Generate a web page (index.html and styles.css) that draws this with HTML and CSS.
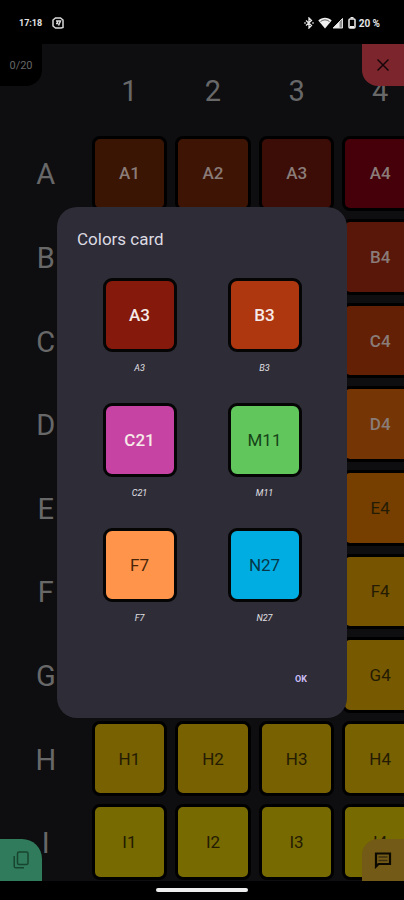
FILE: index.html
```html
<!DOCTYPE html>
<html lang="en">
<head>
<meta charset="utf-8">
<meta name="viewport" content="width=device-width, initial-scale=1">
<title>Colors card</title>
<link rel="stylesheet" href="styles.css">
</head>
<body>
<header class="status">
  <div class="status-group status-left">
    <span>17:18</span>
    <svg class="status-app" viewBox="0 0 12 12" width="12" height="12" fill="none" stroke="#d8d8d8" stroke-width="1.5"><path d="M3.5 1h5L11 3v7.500L9 11H3.500L1 9V3z"/><path d="M4 4h1.500v2.500H4M6 4h2.500L6.500 8.500"/></svg>
  </div>
  <div class="status-group status-right">
    <svg viewBox="0 0 10 12" width="10" height="12" fill="none" stroke="#e8e8e8" stroke-width="1.300"><path d="M2 3.500l5.500 5L5 11V1l2.500 2.500-5.500 5M.3 6h1.400M8.300 6h1.400"/></svg>
    <svg class="wifi" viewBox="0 0 14 12" width="14" height="12" fill="#f0f0f0"><path d="M7 11.500L.3 3.500C4-.2 10-.2 13.700 3.500z"/><path d="M2.500 4.500Q7 1.200 11.500 4.500" fill="none" stroke="#000" stroke-width=".6"/></svg>
    <svg viewBox="0 0 12 12" width="12" height="12"><path d="M11 1v10H1z" fill="#8d8d8d"/><path d="M7.500 4.500V11H1z" fill="#f0f0f0"/><path d="M10.500 1.500V11H1z" fill="none" stroke="#ddd"/></svg>
    <svg class="battery" viewBox="0 0 8 12" width="8" height="12"><path d="M2.500 0h3v1.500h-3z" fill="#eee"/><rect x="1" y="2" width="6" height="9" rx="1" fill="none" stroke="#eee" stroke-width="1.500"/><path d="M2 9h4v2H2z" fill="#eee"/></svg>
    <span>20 %</span>
  </div>
</header>
<main class="stage">
  <table class="board">
    <thead><tr><td></td><th scope="col">1</th><th scope="col">2</th><th scope="col">3</th><th scope="col">4</th></tr></thead>
    <tbody>
      <tr class="row-a"><th scope="row">A</th><td class="a1"><span>A1</span></td><td class="a2"><span>A2</span></td><td class="a3"><span>A3</span></td><td class="a4"><span>A4</span></td></tr>
      <tr class="row-b"><th scope="row">B</th><td><span></span></td><td><span></span></td><td><span></span></td><td><span>B4</span></td></tr>
      <tr class="row-c"><th scope="row">C</th><td><span></span></td><td><span></span></td><td><span></span></td><td><span>C4</span></td></tr>
      <tr class="row-d"><th scope="row">D</th><td><span></span></td><td><span></span></td><td><span></span></td><td><span>D4</span></td></tr>
      <tr class="row-e dark"><th scope="row">E</th><td><span></span></td><td><span></span></td><td><span></span></td><td><span>E4</span></td></tr>
      <tr class="row-f dark"><th scope="row">F</th><td><span></span></td><td><span></span></td><td><span></span></td><td><span>F4</span></td></tr>
      <tr class="row-g dark"><th scope="row">G</th><td><span></span></td><td><span></span></td><td><span></span></td><td><span>G4</span></td></tr>
      <tr class="row-h dark"><th scope="row">H</th><td><span>H1</span></td><td><span>H2</span></td><td><span>H3</span></td><td><span>H4</span></td></tr>
      <tr class="row-i dark"><th scope="row">I</th><td><span>I1</span></td><td><span>I2</span></td><td><span>I3</span></td><td><span>I4</span></td></tr>
    </tbody>
  </table>
  <div class="tab tab-count">0/20</div>
  <button class="tab tab-close" aria-label="Close"><svg viewBox="0 0 12 12" width="12" height="12" fill="none" stroke="#16060a" stroke-width="1.500"><path d="M.5.5l11 11M11.500.5l-11 11"/></svg></button>
  <button class="tab tab-copy" aria-label="Copy"><svg viewBox="0 0 16 18" width="16" height="18" fill="none" stroke="#17452f" stroke-width="1.500"><rect x="4.500" y="1" width="10.500" height="12.500" rx="1.500"/><path d="M1.200 5v10.200Q1.200 16.800 2.800 16.800H11"/></svg></button>
  <button class="tab tab-chat" aria-label="Messages"><svg viewBox="0 0 18 17" width="18" height="17"><path d="M2 1.500h14v10.500H4.500L2 14.500z" fill="none" stroke="#0c0900" stroke-width="2.200"/><path d="M4.500 5h9M4.500 8.500h9" stroke="#3c3010" stroke-width="1.300"/></svg></button>
  <div class="overlay">
    <section class="dialog" role="dialog" aria-labelledby="dialog-title">
      <h1 id="dialog-title">Colors card</h1>
      <div class="swatches">
        <figure><div class="chip red">A3</div><figcaption>A3</figcaption></figure>
        <figure><div class="chip rust">B3</div><figcaption>B3</figcaption></figure>
        <figure><div class="chip pink">C21</div><figcaption>C21</figcaption></figure>
        <figure><div class="chip green">M11</div><figcaption>M11</figcaption></figure>
        <figure><div class="chip orange">F7</div><figcaption>F7</figcaption></figure>
        <figure><div class="chip blue">N27</div><figcaption>N27</figcaption></figure>
      </div>
      <button class="ok">OK</button>
    </section>
  </div>
</main>
<footer class="nav"><div class="pill"></div></footer>
</body>
</html>
```
FILE: styles.css
```css
* { box-sizing: border-box; }
body {
  margin: 0;
  height: 100vh;
  display: flex;
  flex-direction: column;
  background: #000;
  font-family: Roboto, "Liberation Sans", sans-serif;
}
button { border: 0; padding: 0; font: inherit; }
svg { display: block; }

.status {
  flex: none;
  height: 44px;
  padding: 2px 24px 0 19px;
  display: flex;
  align-items: center;
  justify-content: space-between;
  color: #e4e4e4;
  font-size: 10px;
  font-weight: 700;
}
.status-group { display: flex; align-items: center; }
.status-left { font-size: 9px; }
.status-app { margin-left: 10px; }
.wifi { margin-left: 4px; }
.battery { margin: 0 3px 0 4px; }

.stage {
  position: relative;
  flex: 1;
  min-height: 0;
  overflow: hidden;
  background: #0e0e10;
}
.board {
  display: block;
  margin: 4px -18px 0 4px;
  color: #686869;
}
.board thead, .board tbody { display: block; }
.board tr { display: grid; grid-template-columns: repeat(5, 1fr); }
.board th, .board td {
  aspect-ratio: 1;
  min-width: 0;
  padding: 4px;
  display: grid;
}
.board th { padding-top: 6px; place-items: center; font-size: 29px; font-weight: 400; }
.board td span {
  display: grid;
  place-items: center;
  border: 3px solid #000;
  border-radius: 8px;
  background: var(--cell);
  color: #8a7c78;
  font-size: 17px;
  font-weight: 500;
}
.board .dark span { color: #241b04; font-weight: 400; }
.row-a .a1 { --cell: #3b1503; }
.row-a .a2 { --cell: #3e1505; }
.row-a .a3 { --cell: #3c0c06; }
.row-a .a4 { --cell: #46000a; }
.row-b { --cell: #581709; }
.row-c { --cell: #632005; }
.row-d { --cell: #753504; }
.row-e { --cell: #763f00; }
.row-f { --cell: #765400; }
.row-g { --cell: #775900; }
.row-h { --cell: #776100; }
.row-i { --cell: #766a00; }

.tab {
  position: absolute;
  width: 42px;
  height: 42px;
  display: grid;
  place-items: center;
}
.tab-count { top: 0; left: 0; background: #000; color: #666; font-size: 11px; border-bottom-right-radius: 16px; }
.tab-close { top: 0; right: 0; background: #7d252c; border-bottom-left-radius: 16px; }
.tab-copy { bottom: 0; left: 0; background: #307b5b; border-top-right-radius: 20px; }
.tab-chat { bottom: 0; right: 0; background: #735a16; border-top-left-radius: 16px; }

.overlay {
  position: absolute;
  inset: 0;
  display: grid;
  place-items: center;
}
.dialog {
  width: calc(100% - 114px);
  max-width: 420px;
  padding: 20px 20px 27px;
  display: flex;
  flex-direction: column;
  border-radius: 20px;
  background: #2e2c37;
}
.dialog h1 {
  margin: 0 0 27px;
  color: #dddbe2;
  font-size: 17px;
  line-height: 24px;
  font-weight: 400;
}
.swatches { display: grid; grid-template-columns: repeat(2, 1fr); row-gap: 27px; }
figure { margin: 0; display: flex; flex-direction: column; align-items: center; gap: 8px; }
.chip {
  width: 74px;
  height: 74px;
  display: grid;
  place-items: center;
  border: 3px solid #050505;
  border-radius: 9px;
  color: #f6eae8;
  font-size: 17px;
  font-weight: 500;
}
.red { background: #84190c; }
.rust { background: #ae3710; }
.pink { background: #c642a3; }
.green { background: #61c75d; color: #164317; font-weight: 400; }
.orange { background: #ff944a; color: #482509; font-weight: 400; }
.blue { background: #00ade2; color: #063748; font-weight: 400; }
figcaption { color: #e2e0e6; font-size: 9px; line-height: 16px; font-style: italic; }
.ok {
  align-self: flex-end;
  width: 52px;
  height: 24px;
  margin-top: 41px;
  background: transparent;
  color: #cbbef5;
  font-size: 9px;
  font-weight: 700;
}

.nav { flex: none; height: 19px; display: grid; justify-items: center; padding-top: 7px; }
.pill { width: 92px; height: 4px; border-radius: 2px; background: #eee; }
```
